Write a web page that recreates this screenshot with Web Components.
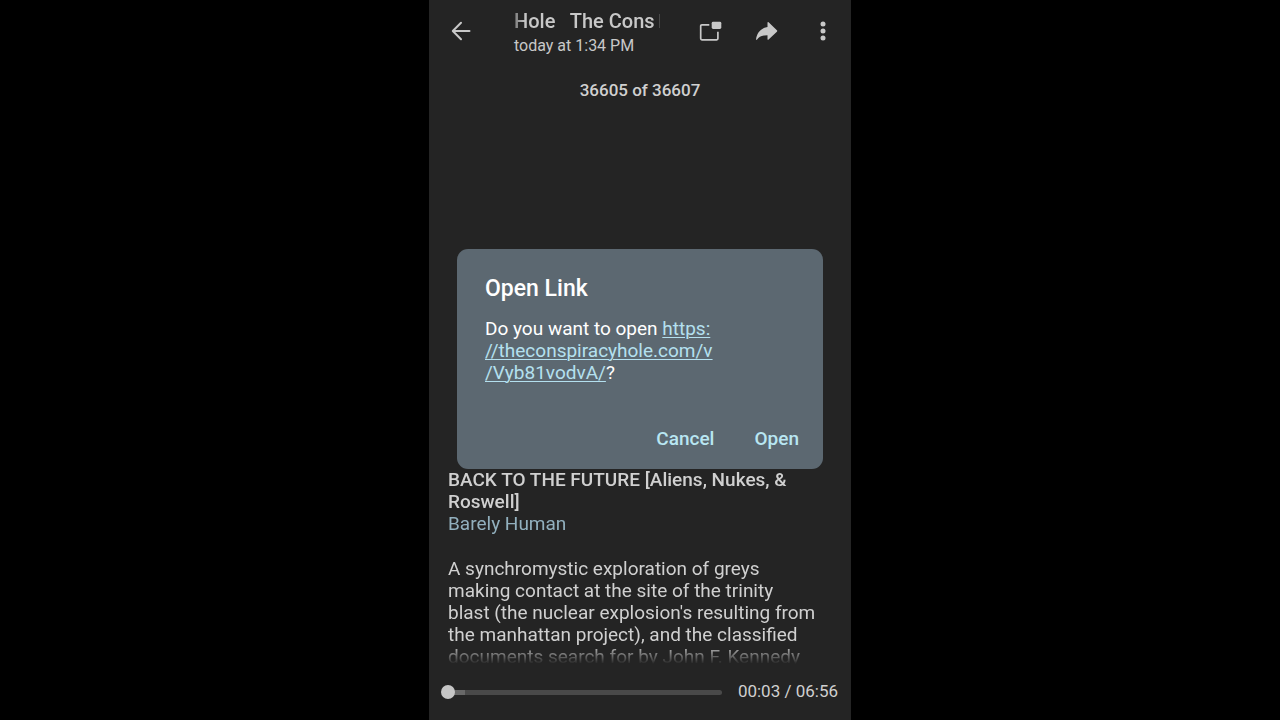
<!DOCTYPE html>
<html lang="en">
<head>
<meta charset="utf-8">
<meta name="viewport" content="width=device-width, initial-scale=1">
<title>Media viewer</title>
<style>
  html, body { margin: 0; background: #000; }
  body { font-family: Roboto, "Noto Sans", sans-serif; color: #d0d0d0; }
</style>
</head>
<body>
<media-viewer>
  <viewer-header slot="header" subtitle="today at 1:34 PM">Hole &nbsp; The Cons</viewer-header>
  <span slot="counter">36605 of 36607</span>
  <media-caption slot="caption" heading="BACK TO THE FUTURE [Aliens, Nukes, &amp; Roswell]" author="Barely Human">A synchromystic exploration of greys<br>making contact at the site of the trinity<br>blast (the nuclear explosion's resulting from<br>the manhattan project), and the classified<br>documents search for by John F. Kennedy</media-caption>
  <media-player slot="player" position="3" duration="416">00:03 / 06:56</media-player>
  <link-dialog slot="dialog" heading="Open Link">Do you want to open <a href="https://theconspiracyhole.com/v/Vyb81vodvA/">https:<br>//theconspiracyhole.com/v<br>/Vyb81vodvA/</a>?</link-dialog>
</media-viewer>

<script>
class BaseElement extends HTMLElement {
  render(html) { this.attachShadow({ mode: 'open' }).innerHTML = html; }
  fill(selector, attribute) {
    this.shadowRoot.querySelector(selector).textContent = this.getAttribute(attribute);
  }
}

customElements.define('media-viewer', class extends BaseElement {
  connectedCallback() {
    this.render(`
      <style>
        :host { display: flex; flex-direction: column; position: relative; box-sizing: border-box;
          max-width: 422px; height: 100vh; margin: 0 auto; background: #242424; overflow: hidden; }
        .counter { padding-top: 18px; text-align: center; font-size: 17px; line-height: 20px; font-weight: 500; }
        main { flex: 1; display: flex; flex-direction: column; justify-content: flex-end; min-height: 0; }
        .overlay { position: absolute; inset: 0; display: grid; align-items: center; padding: 0 28px 2px; }
      </style>
      <slot name="header"></slot>
      <div class="counter"><slot name="counter"></slot></div>
      <main><slot name="caption"></slot></main>
      <slot name="player"></slot>
      <div class="overlay"><slot name="dialog"></slot></div>`);
  }
});

customElements.define('viewer-header', class extends BaseElement {
  connectedCallback() {
    this.render(`
      <style>
        :host { display: flex; align-items: center; height: 62px; padding: 0 16px 0 20px; color: #c8c8c8; }
        button { display: block; padding: 0; border: 0; background: none; color: inherit; }
        svg { display: block; width: 24px; height: 24px; }
        .text { flex: 1; min-width: 0; padding: 4px 24px 0 41px; }
        h1 { display: flex; align-items: center; gap: 4px; margin: 0; font-size: 20px; line-height: 26px; font-weight: 500; white-space: nowrap;
          -webkit-mask-image: linear-gradient(90deg, #0008, #000 12px); mask-image: linear-gradient(90deg, #0008, #000 12px); }
        /* leading edge of the next scrolling letter */
        h1::after { content: ""; width: 1px; height: 14px; background: #484848; }
        p { margin: 0; font-size: 16px; line-height: 24px; }
        nav { display: flex; gap: 32px; }
      </style>
      <button aria-label="Back"><svg viewBox="0 0 24 24" fill="none" stroke="currentColor" stroke-width="2" stroke-linecap="round" stroke-linejoin="round"><path d="M20.500 12H4M12 3.800 3.800 12l8.200 8.200"/></svg></button>
      <div class="text"><h1><span><slot></slot></span></h1><p></p></div>
      <nav>
        <button aria-label="Picture in picture"><svg viewBox="0 0 24 24"><path d="M10.300 5.800H2.900Q1.700 5.800 1.700 7v12.600q0 1.200 1.200 1.200h14.800q1.200 0 1.200-1.200v-6.900" fill="none" stroke="currentColor" stroke-width="1.700"/><rect x="12.700" y="2.800" width="9.600" height="7.200" rx="1.400" fill="currentColor"/></svg></button>
        <button aria-label="Share"><svg viewBox="0 0 24 24" fill="currentColor"><path d="M12.500 3.700q.1-1.300 1.100-.5l8.300 8.100q.7.7 0 1.400l-8.300 7.900q-1 .8-1.100-.5v-3.900c-5.500 0-8.300 1.300-10.400 4.300-.6.8-1.200.5-1-.5.8-5.400 4.200-10.800 11.400-12z"/></svg></button>
        <button aria-label="More options"><svg viewBox="0 0 24 24" fill="currentColor"><circle cx="12" cy="5" r="2.500"/><circle cx="12" cy="12" r="2.500"/><circle cx="12" cy="19" r="2.500"/></svg></button>
      </nav>`);
    this.fill('p', 'subtitle');
  }
});

customElements.define('media-caption', class extends BaseElement {
  connectedCallback() {
    this.render(`
      <style>
        :host { display: block; max-height: 195px; padding: 0 28px 0 19px; overflow: hidden; font-size: 19px; line-height: 22px;
          -webkit-mask-image: linear-gradient(#000 calc(100% - 20px), transparent); mask-image: linear-gradient(#000 calc(100% - 20px), transparent); }
        h2 { margin: 0; font-size: inherit; line-height: inherit; font-weight: 500; }
        a { color: #92b0be; text-decoration: none; }
        p { margin: 23px 0 0; }
      </style>
      <h2></h2>
      <a href="#author"></a>
      <p><slot></slot></p>`);
    this.fill('h2', 'heading');
    this.fill('a', 'author');
  }
});

customElements.define('media-player', class extends BaseElement {
  connectedCallback() {
    this.render(`
      <style>
        :host { display: flex; align-items: center; gap: 16px; height: 56px; padding: 0 13px 0 10px; font-size: 17px; line-height: 20px; }
        input { flex: 1; min-width: 0; height: 14px; margin: 0; background: none; appearance: none; }
        input::-webkit-slider-runnable-track { height: 5px; border-radius: 3px;
          background: linear-gradient(90deg, transparent 9px, #686868 9px, #686868 26px, #494949 26px); }
        input::-webkit-slider-thumb { appearance: none; width: 14px; height: 14px; margin-top: -5px; border-radius: 50%; background: #c6c6c6; }
        span { padding-bottom: 2px; white-space: nowrap; }
      </style>
      <input type="range" aria-label="Seek" min="0">
      <span><slot></slot></span>`);
    const range = this.shadowRoot.querySelector('input');
    range.max = this.getAttribute('duration');
    range.value = this.getAttribute('position');
  }
});

customElements.define('link-dialog', class extends BaseElement {
  connectedCallback() {
    this.render(`
      <style>
        :host { display: block; color: #fff; }
        section { padding: 24px 24px 16px 28px; border-radius: 11px; background: #5c6871; }
        h2 { margin: 0 0 13px; font-size: 23px; line-height: 32px; font-weight: 500; }
        p { margin: 0; font-size: 19px; line-height: 22px; }
        ::slotted(a) { color: #b4e0ef; text-decoration-thickness: 1px; text-underline-offset: 2px; }
        footer { display: flex; justify-content: flex-end; gap: 40px; margin-top: 41px; }
        button { padding: 0; border: 0; background: none; color: #b8e6f2; font: 500 19px/28px Roboto, "Noto Sans", sans-serif; }
      </style>
      <section role="dialog" aria-labelledby="title">
        <h2 id="title"></h2>
        <p><slot></slot></p>
        <footer><button>Cancel</button><button>Open</button></footer>
      </section>`);
    this.fill('h2', 'heading');
  }
});
</script>
</body>
</html>
